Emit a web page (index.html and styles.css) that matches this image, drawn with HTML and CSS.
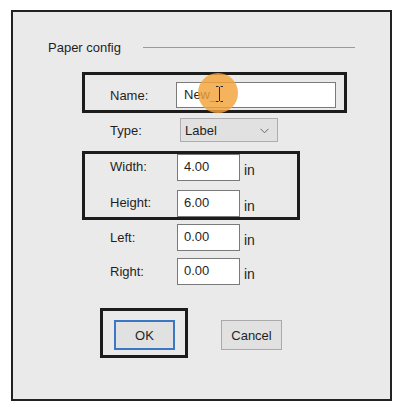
FILE: index.html
```html
<!DOCTYPE html>
<html lang="en">
<head>
<meta charset="utf-8">
<title>Paper config</title>
<link rel="stylesheet" href="styles.css">
</head>
<body>
<div class="dialog">
  <div class="header">
    <span class="header-title">Paper config</span>
    <span class="header-rule"></span>
  </div>

  <div class="mark name-box">
    <label class="label">Name:</label>
    <div class="name-field">
      <div class="input name-input">New_</div>
      <span class="click-spot"></span>
      <svg class="ibeam" width="9" height="16" viewBox="0 0 9 16">
        <path d="M1 0.5h2.5M5.5 0.5H8M4.5 1v14M1 15.5h2.5M5.5 15.5H8" stroke="#2a2a2a" stroke-width="1" fill="none"/>
      </svg>
    </div>
  </div>

  <div class="row type-row">
    <label class="label">Type:</label>
    <div class="select">
      <span>Label</span>
      <svg class="chevron" width="9" height="6" viewBox="0 0 9 6">
        <path d="M0.5 0.8L4.5 4.8L8.5 0.8" stroke="#666" stroke-width="1" fill="none"/>
      </svg>
    </div>
  </div>

  <div class="mark size-box">
    <div class="row">
      <label class="label">Width:</label>
      <div class="input num">4.00</div>
      <span class="unit">in</span>
    </div>
    <div class="row">
      <label class="label">Height:</label>
      <div class="input num">6.00</div>
      <span class="unit">in</span>
    </div>
  </div>

  <div class="row plain-row left-row">
    <label class="label">Left:</label>
    <div class="input num">0.00</div>
    <span class="unit">in</span>
  </div>
  <div class="row plain-row right-row">
    <label class="label">Right:</label>
    <div class="input num">0.00</div>
    <span class="unit">in</span>
  </div>

  <div class="actions">
    <div class="mark ok-box">
      <button class="btn btn-default">OK</button>
    </div>
    <button class="btn btn-cancel">Cancel</button>
  </div>
</div>
</body>
</html>
```

FILE: styles.css
```css
* {
  box-sizing: border-box;
}

html, body {
  margin: 0;
  padding: 0;
  background: #ffffff;
}

body {
  font-family: "Liberation Sans", Arial, sans-serif;
  font-size: 13px;
  color: #1f1f1f;
}

.dialog {
  margin: 10px 0 0 11px;
  width: 381px;
  height: 391px;
  border: 2px solid #222222;
  background: #ebeaea;
  display: flex;
  flex-direction: column;
  align-items: flex-start;
}

/* group title with trailing rule */
.header {
  margin: 28px 0 0 35px;
  display: flex;
  align-items: center;
  height: 15px;
  line-height: 15px;
}

.header-title {
  white-space: nowrap;
}

.header-rule {
  margin-left: 22px;
  width: 212px;
  height: 1px;
  background: #9a9a9a;
}

/* thick dark outline around highlighted groups */
.mark {
  border: 3px solid #1c1c1c;
}

.label {
  display: block;
  line-height: 15px;
}

.row {
  display: flex;
  align-items: center;
}

.input {
  background: #ffffff;
  border: 1px solid #7a7a7a;
  color: #1f1f1f;
  white-space: nowrap;
}

.num {
  width: 63px;
  height: 27px;
  padding: 4px 0 0 6px;
  line-height: 15px;
}

.unit {
  margin: 4px 0 0 4px;
  font-size: 14px;
}

/* name */
.name-box {
  margin: 17px 0 0 69px;
  width: 265px;
  height: 41px;
  display: flex;
  align-items: flex-start;
  padding-top: 7px;
}

.name-box .label {
  width: 91px;
  padding-left: 25px;
  margin-top: 6px;
}

.name-field {
  position: relative;
}

.name-input {
  width: 160px;
  height: 26px;
  padding: 4px 0 0 7px;
  line-height: 15px;
}

.click-spot {
  position: absolute;
  left: 22px;
  top: -9px;
  width: 40px;
  height: 40px;
  border-radius: 50%;
  background: rgba(241, 162, 56, 0.82);
}

.ibeam {
  position: absolute;
  left: 39px;
  top: 4px;
}

/* type */
.type-row {
  margin: 5px 0 0 97px;
}

.type-row .label {
  width: 70px;
}

.select {
  width: 98px;
  height: 24px;
  background: #e1e1e1;
  border: 1px solid #adadad;
  display: flex;
  align-items: center;
  justify-content: space-between;
  padding: 0 8px 0 4px;
}

.chevron {
  margin-top: 1px;
}

/* width / height */
.size-box {
  margin: 9px 0 0 69px;
  width: 218px;
  height: 69px;
  display: flex;
  flex-direction: column;
  gap: 9px;
}

.size-box .label {
  width: 92px;
  padding-left: 25px;
  margin-top: -3px;
}

/* left / right */
.plain-row {
  margin-left: 97px;
}

.plain-row .label {
  width: 67px;
}

.left-row {
  margin-top: 4px;
}

.right-row {
  margin-top: 7px;
}

/* buttons */
.actions {
  margin: 23px 0 0 87px;
  display: flex;
  align-items: flex-start;
}

.ok-box {
  width: 88px;
  height: 50px;
  padding: 9px 0 0 11px;
}

.btn {
  font-family: "Liberation Sans", Arial, sans-serif;
  font-size: 13px;
  color: #1f1f1f;
  background: #e1e1e1;
  width: 61px;
  height: 30px;
  padding: 0;
  margin: 0;
  line-height: 15px;
}

.btn-default {
  border: 2px solid #3a78c4;
}

.btn-cancel {
  margin: 12px 0 0 33px;
  border: 1px solid #a9a9a9;
}
```
